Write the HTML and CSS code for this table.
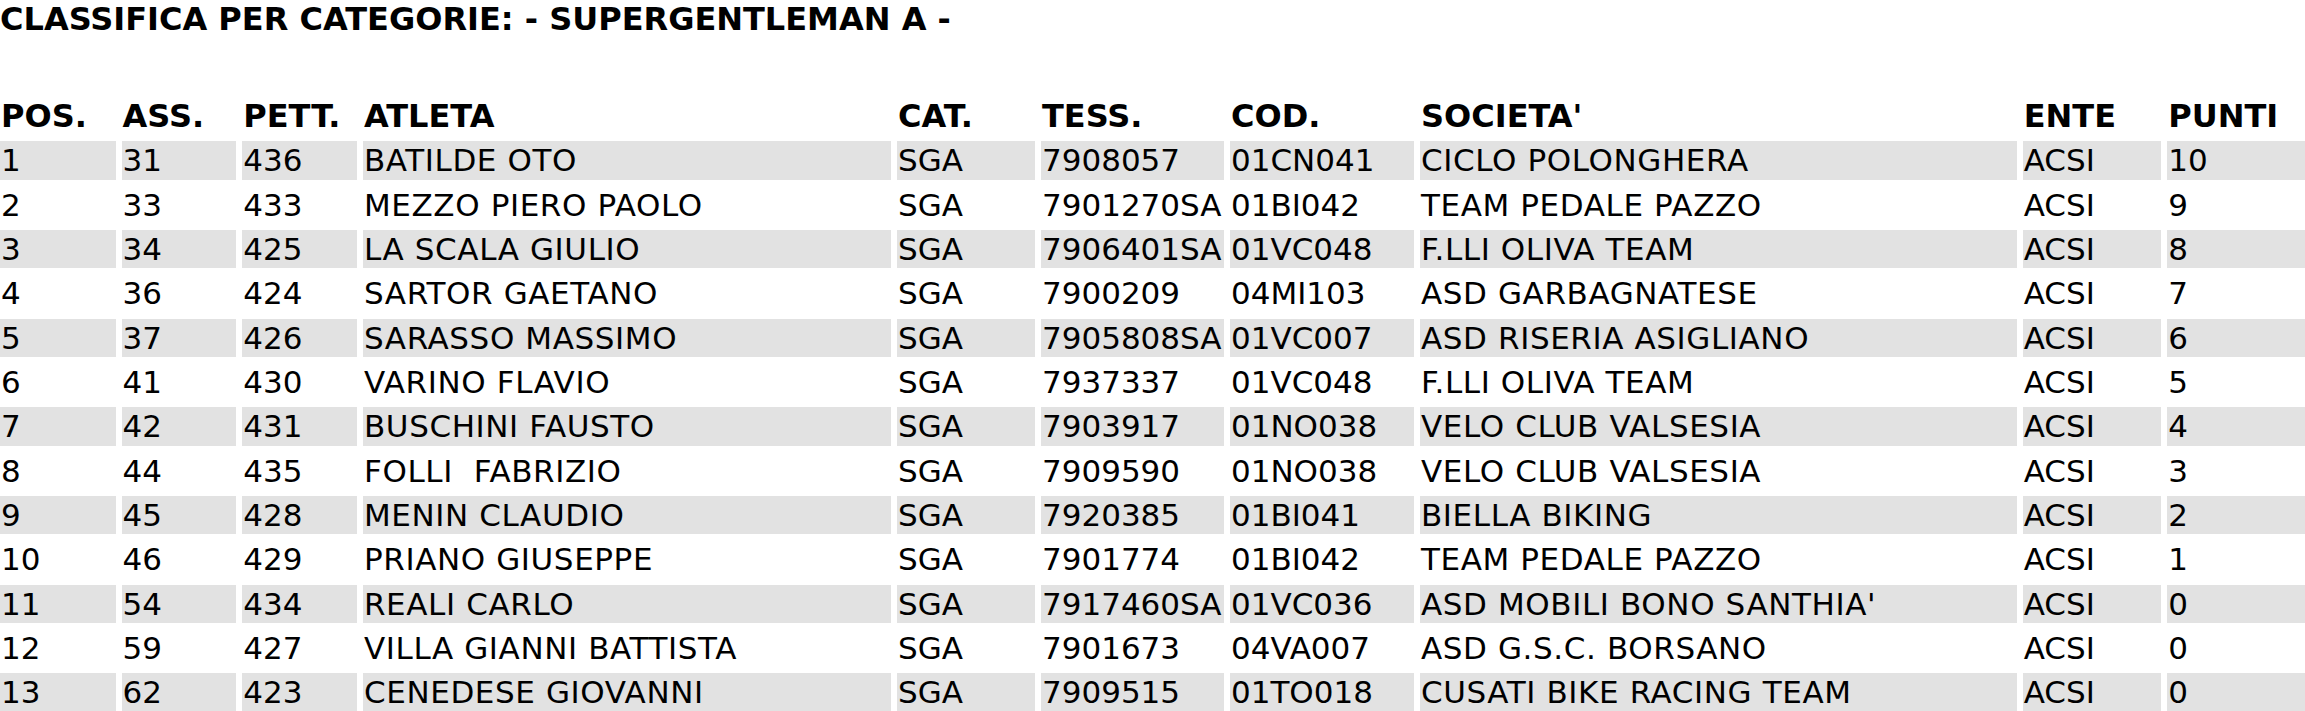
FILE: index.html
```html
<!DOCTYPE html>
<html lang="it">
<head>
<meta charset="utf-8">
<title>Classifica per categorie</title>
<link rel="stylesheet" href="styles.css">
</head>
<body>
<h1 class="title">CLASSIFICA PER CATEGORIE: - SUPERGENTLEMAN A -</h1>
<table class="ranking">
  <colgroup>
    <col class="c-pos"><col class="c-ass"><col class="c-pett"><col class="c-atleta"><col class="c-cat">
    <col class="c-tess"><col class="c-cod"><col class="c-soc"><col class="c-ente"><col class="c-punti">
  </colgroup>
  <thead>
    <tr><th>POS.</th><th>ASS.</th><th>PETT.</th><th>ATLETA</th><th>CAT.</th><th>TESS.</th><th>COD.</th><th>SOCIETA'</th><th>ENTE</th><th>PUNTI</th></tr>
  </thead>
  <tbody>
    <tr class="alt"><td>1</td><td>31</td><td>436</td><td class="name">BATILDE OTO</td><td>SGA</td><td>7908057</td><td>01CN041</td><td class="name">CICLO POLONGHERA</td><td>ACSI</td><td>10</td></tr>
    <tr><td>2</td><td>33</td><td>433</td><td class="name">MEZZO PIERO PAOLO</td><td>SGA</td><td>7901270SA</td><td>01BI042</td><td class="name">TEAM PEDALE PAZZO</td><td>ACSI</td><td>9</td></tr>
    <tr class="alt"><td>3</td><td>34</td><td>425</td><td class="name">LA SCALA GIULIO</td><td>SGA</td><td>7906401SA</td><td>01VC048</td><td class="name">F.LLI OLIVA TEAM</td><td>ACSI</td><td>8</td></tr>
    <tr><td>4</td><td>36</td><td>424</td><td class="name">SARTOR GAETANO</td><td>SGA</td><td>7900209</td><td>04MI103</td><td class="name">ASD GARBAGNATESE</td><td>ACSI</td><td>7</td></tr>
    <tr class="alt"><td>5</td><td>37</td><td>426</td><td class="name">SARASSO MASSIMO</td><td>SGA</td><td>7905808SA</td><td>01VC007</td><td class="name">ASD RISERIA ASIGLIANO</td><td>ACSI</td><td>6</td></tr>
    <tr><td>6</td><td>41</td><td>430</td><td class="name">VARINO FLAVIO</td><td>SGA</td><td>7937337</td><td>01VC048</td><td class="name">F.LLI OLIVA TEAM</td><td>ACSI</td><td>5</td></tr>
    <tr class="alt"><td>7</td><td>42</td><td>431</td><td class="name">BUSCHINI FAUSTO</td><td>SGA</td><td>7903917</td><td>01NO038</td><td class="name">VELO CLUB VALSESIA</td><td>ACSI</td><td>4</td></tr>
    <tr><td>8</td><td>44</td><td>435</td><td class="name">FOLLI &nbsp;FABRIZIO</td><td>SGA</td><td>7909590</td><td>01NO038</td><td class="name">VELO CLUB VALSESIA</td><td>ACSI</td><td>3</td></tr>
    <tr class="alt"><td>9</td><td>45</td><td>428</td><td class="name">MENIN CLAUDIO</td><td>SGA</td><td>7920385</td><td>01BI041</td><td class="name">BIELLA BIKING</td><td>ACSI</td><td>2</td></tr>
    <tr><td>10</td><td>46</td><td>429</td><td class="name">PRIANO GIUSEPPE</td><td>SGA</td><td>7901774</td><td>01BI042</td><td class="name">TEAM PEDALE PAZZO</td><td>ACSI</td><td>1</td></tr>
    <tr class="alt"><td>11</td><td>54</td><td>434</td><td class="name">REALI CARLO</td><td>SGA</td><td>7917460SA</td><td>01VC036</td><td class="name">ASD MOBILI BONO SANTHIA'</td><td>ACSI</td><td>0</td></tr>
    <tr><td>12</td><td>59</td><td>427</td><td class="name">VILLA GIANNI BATTISTA</td><td>SGA</td><td>7901673</td><td>04VA007</td><td class="name">ASD G.S.C. BORSANO</td><td>ACSI</td><td>0</td></tr>
    <tr class="alt"><td>13</td><td>62</td><td>423</td><td class="name">CENEDESE GIOVANNI</td><td>SGA</td><td>7909515</td><td>01TO018</td><td class="name">CUSATI BIKE RACING TEAM</td><td>ACSI</td><td>0</td></tr>
  </tbody>
</table>
</body>
</html>
```
FILE: styles.css
```css
html, body {
  margin: 0;
  padding: 0;
  overflow: hidden;
  background: #ffffff;
  color: #000000;
  font-family: "DejaVu Sans", Verdana, sans-serif;
}

.title {
  margin: 0;
  font-size: 32px;
  font-weight: bold;
  line-height: 38px;
  white-space: nowrap;
}

.ranking {
  margin: 53px 0 0 -6px;
  border-collapse: separate;
  border-spacing: 6px;
  table-layout: fixed;
  width: 2317px;
  font-size: 31px;
}

.ranking th,
.ranking td {
  height: 38.33px;
  padding: 0 1px;
  line-height: 38px;
  text-align: left;
  vertical-align: middle;
  white-space: nowrap;
  overflow: visible;
}

.ranking th {
  font-weight: bold;
  font-size: 32px;
}

.ranking td.name {
  letter-spacing: 0.6px;
}

.ranking tr.alt td {
  background: #e2e2e2;
}

.c-pos { width: 115.5px; }
.c-ass { width: 114.8px; }
.c-pett { width: 114.7px; }
.c-atleta { width: 528px; }
.c-cat { width: 138px; }
.c-tess { width: 183px; }
.c-cod { width: 184px; }
.c-soc { width: 596.7px; }
.c-ente { width: 138.6px; }
.c-punti { width: 137.7px; }
```
